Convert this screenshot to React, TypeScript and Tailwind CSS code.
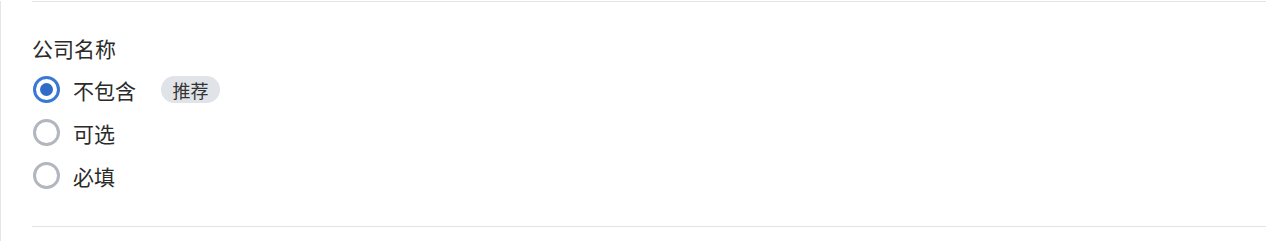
import { useState } from "react";

const options = [
  { value: "none", label: "不包含", recommended: true },
  { value: "optional", label: "可选" },
  { value: "required", label: "必填" },
];

const Radio = ({ checked }: { checked: boolean }) => (
  <span
    className={
      checked
        ? "flex h-[27px] w-[27px] shrink-0 items-center justify-center rounded-full border-[3px] border-[#3a78d4]"
        : "flex h-[27px] w-[27px] shrink-0 items-center justify-center rounded-full border-[3px] border-[#b2b7bf]"
    }
  >
    {checked && <span className="h-[13px] w-[13px] rounded-full bg-[#2f6cc8]" />}
  </span>
);

export default function App() {
  const [value, setValue] = useState("none");

  return (
    <div
      className="h-[241px] w-full border-l border-[#e4e5e8] bg-white pl-[31px] pr-[20px] text-[#2b2b2b]"
      style={{ fontFamily: '"Noto Sans CJK SC", "Noto Sans", sans-serif' }}
    >
      <div className="mt-[1px] border-t border-[#e2e3e6]" />
      <div className="pt-[32px] pb-[29px]">
        <div className="h-[28px] text-[21px] leading-[28px]">公司名称</div>
        <div className="mt-[6px] flex flex-col">
          {options.map((o) => (
            <label
              key={o.value}
              className="flex h-[43px] cursor-pointer items-center"
              onClick={() => setValue(o.value)}
            >
              <span className="ml-[1px]">
                <Radio checked={value === o.value} />
              </span>
              <span className="ml-[13px] text-[21px] leading-[28px]">{o.label}</span>
              {o.recommended && (
                <span className="ml-[25px] flex h-[27px] w-[59px] items-center justify-center rounded-full bg-[#e0e3e7] text-[18px] leading-none text-[#333]">
                  推荐
                </span>
              )}
            </label>
          ))}
        </div>
      </div>
      <div className="border-t border-[#e2e3e6]" />
    </div>
  );
}
